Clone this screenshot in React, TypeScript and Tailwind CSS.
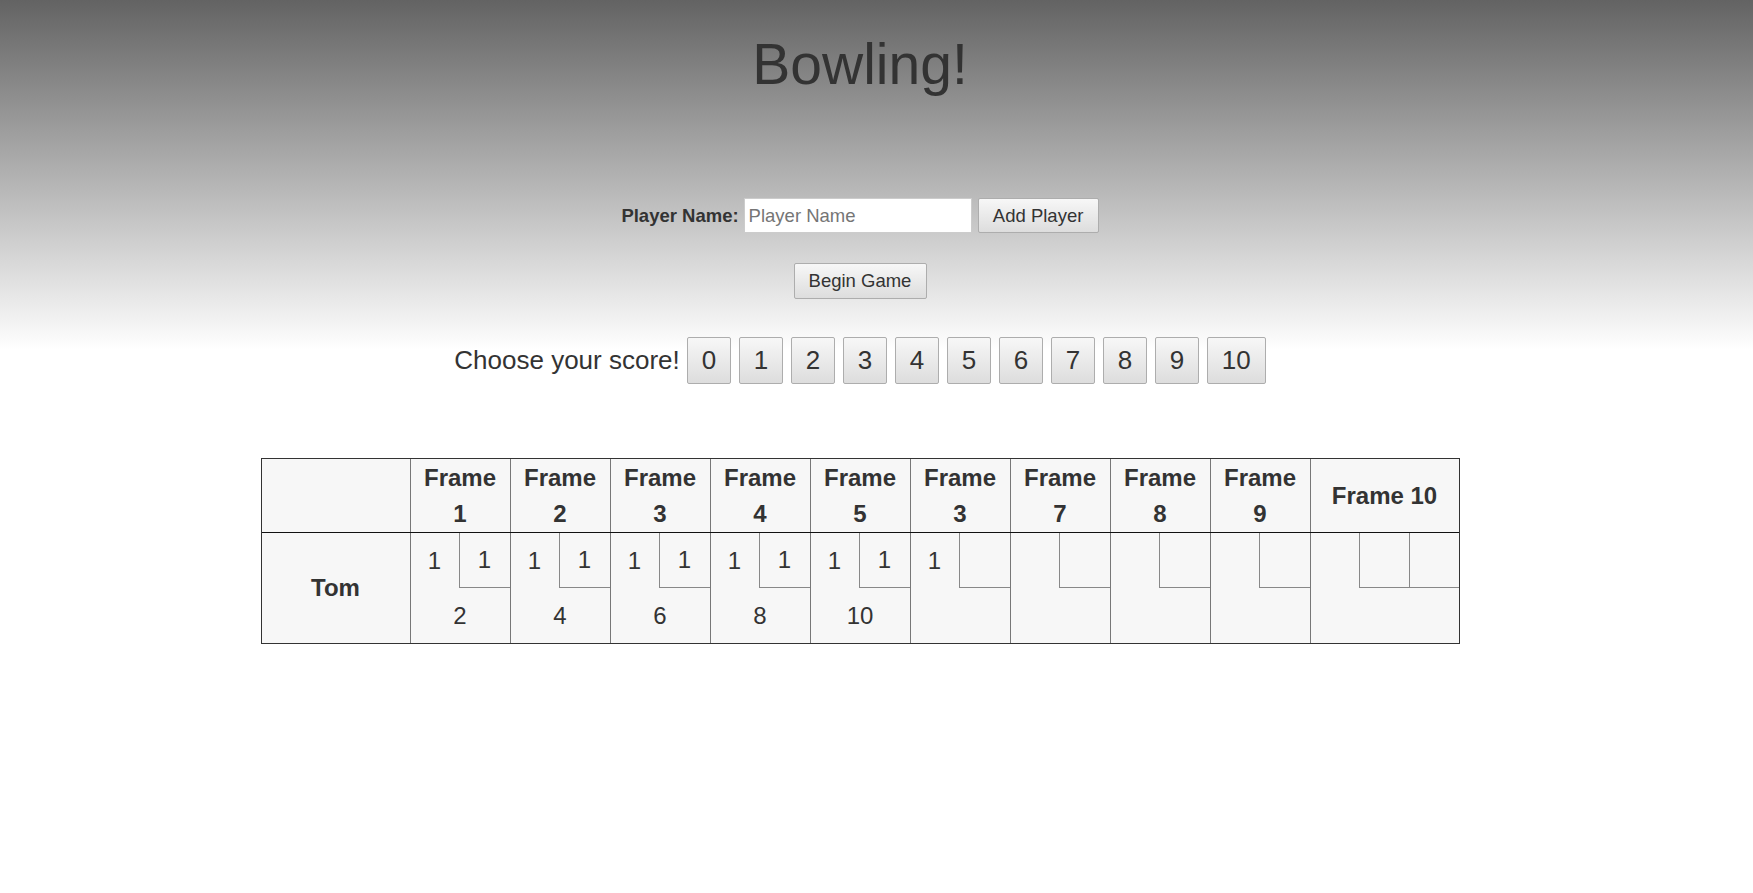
const rolls: { r1: string; r2: string; total: string }[] = [
  { r1: '1', r2: '1', total: '2' },
  { r1: '1', r2: '1', total: '4' },
  { r1: '1', r2: '1', total: '6' },
  { r1: '1', r2: '1', total: '8' },
  { r1: '1', r2: '1', total: '10' },
  { r1: '1', r2: '', total: '' },
  { r1: '', r2: '', total: '' },
  { r1: '', r2: '', total: '' },
  { r1: '', r2: '', total: '' },
];

// the 6th header really says "Frame 3" in the original
const headers = ['1', '2', '3', '4', '5', '3', '7', '8', '9'];

const btn =
  'border border-[#adadad] rounded-[2px] bg-[linear-gradient(180deg,#f7f7f7,#dddddd)] text-[#333] cursor-pointer';

function FrameCell({ r1, r2, total }: { r1: string; r2: string; total: string }) {
  return (
    <div className="w-[100px] border-l border-[#777] flex flex-col">
      <div className="flex h-[55px]">
        <div className="w-[48px] flex items-center justify-center">{r1}</div>
        <div className="flex-1 border-l border-b border-[#888] flex items-center justify-center">{r2}</div>
      </div>
      <div className="flex-1 flex items-center justify-center">{total}</div>
    </div>
  );
}

export default function App() {
  return (
    <div className="min-h-screen w-full bg-[linear-gradient(180deg,#636363_0px,#ffffff_350px)] font-['Liberation_Sans',Arial,sans-serif] text-[#333]">
      <div className="w-[1720px] flex flex-col items-center">
        <h1 className="mt-[31px] h-[66px] text-[57px] leading-[66px] font-normal">Bowling!</h1>

        <div className="mt-[101px] flex items-center h-[35px] text-[18.5px]">
          <label className="font-bold mr-[5px]">Player Name:</label>
          <input
            className="w-[228px] h-[35px] bg-white border border-[#cccccc] px-[4px] outline-none placeholder:text-[#757575]"
            placeholder="Player Name"
          />
          <button className={`${btn} ml-[6px] w-[121px] h-[35px]`}>Add Player</button>
        </div>

        <button className={`${btn} mt-[30px] w-[133px] h-[36px] text-[18.5px]`}>Begin Game</button>

        <div className="mt-[38px] flex items-center h-[47px] text-[26px]">
          <span className="mr-[7px]">Choose your score!</span>
          <div className="flex gap-[7.5px]">
            {[0, 1, 2, 3, 4, 5, 6, 7, 8, 9, 10].map((n) => (
              <button key={n} className={`${btn} h-[47px] px-[14px] min-w-[44.5px]`}>
                {n}
              </button>
            ))}
          </div>
        </div>

        <div className="mt-[74px] border border-[#333] bg-[#f7f7f7] text-[24px]">
          <div className="flex h-[74px] border-b border-[#111] font-bold leading-[36px]">
            <div className="w-[148px]" />
            {headers.map((h, i) => (
              <div key={i} className="w-[100px] border-l border-[#777] flex flex-col items-center justify-center">
                <span>Frame</span>
                <span>{h}</span>
              </div>
            ))}
            <div className="w-[149px] border-l border-[#777] flex items-center justify-center">Frame 10</div>
          </div>
          <div className="flex h-[110px]">
            <div className="w-[148px] flex items-center justify-center font-bold">Tom</div>
            {rolls.map((r, i) => (
              <FrameCell key={i} {...r} />
            ))}
            <div className="w-[149px] border-l border-[#777] flex flex-col">
              <div className="flex h-[55px]">
                <div className="flex-1" />
                <div className="flex-1 border-l border-b border-[#888]" />
                <div className="flex-1 border-l border-b border-[#888]" />
              </div>
              <div className="flex-1" />
            </div>
          </div>
        </div>
      </div>
    </div>
  );
}
